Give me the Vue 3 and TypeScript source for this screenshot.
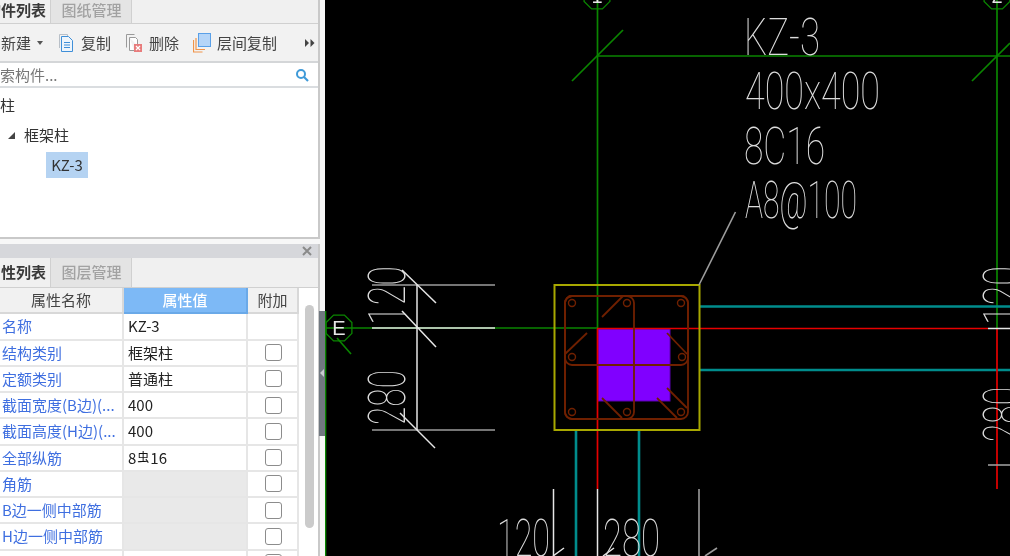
<script setup lang="ts">
interface PropRow {
  name: string
  value?: string
  sym?: boolean
  empty?: boolean
  noCheck?: boolean
}

const rows: PropRow[] = [
  { name: '名称', value: 'KZ-3', noCheck: true },
  { name: '结构类别', value: '框架柱' },
  { name: '定额类别', value: '普通柱' },
  { name: '截面宽度(B边)(...', value: '400' },
  { name: '截面高度(H边)(...', value: '400' },
  { name: '全部纵筋', sym: true },
  { name: '角筋', empty: true },
  { name: 'B边一侧中部筋', empty: true },
  { name: 'H边一侧中部筋', empty: true },
  { name: '箍筋', value: '中8@100(4*4)' }
]

type Seg = [number, number, number, number]

const green: Seg[] = [
  [597.5, 0, 597.5, 329],
  [997, 0, 997, 328],
  [597, 56, 1010, 56],
  [572, 81, 623, 30],
  [972, 81, 1010, 43],
  [326, 328, 597, 328],
  [337, 338, 351, 354],
  [325.5, 311, 325.5, 556]
]
const red: Seg[] = [
  [597.5, 329, 597.5, 489],
  [997, 328, 997, 489],
  [597, 328.5, 988, 328.5]
]
const teal: Seg[] = [
  [699, 306.5, 1010, 306.5],
  [699, 370, 1010, 370],
  [576, 430, 576, 556],
  [639, 430, 639, 556]
]
const white: Seg[] = [
  [372, 328, 495, 328],
  [417, 285, 417, 430],
  [402, 270, 436, 303],
  [402, 311, 436, 347],
  [400, 413, 435, 448],
  [597.5, 489, 597.5, 556],
  [553.5, 489, 553.5, 556],
  [564, 548, 553, 556],
  [614, 548, 603, 556],
  [988, 328.5, 1010, 328.5]
]
const gray: Seg[] = [
  [372, 285, 495, 285],
  [372, 430, 495, 430],
  [699, 489, 699, 556],
  [717, 548, 705, 556],
  [699, 285, 735.5, 212],
  [988, 465, 1010, 465]
]
const hooks: Seg[] = [
  [602, 317, 623, 296],
  [587, 333, 565, 354],
  [667, 333, 687, 354],
  [667, 388, 687, 408],
  [657, 398, 677, 418],
  [602, 398, 622, 418]
]
const bars = [
  [572, 303], [627, 303], [681, 303],
  [572, 357], [682, 357],
  [572, 412], [627, 412], [681, 412]
]

const labels = [
  { t: 'KZ-3', x: 744, y: 55, w: 76, s: 52 },
  { t: '400x400', x: 745, y: 109, w: 135, s: 52 },
  { t: '8C16', x: 744, y: 164, w: 81, s: 52 },
  { t: 'A8@100', x: 745, y: 218, w: 112, s: 52 },
  { t: '120', x: 497, y: 556, w: 53, s: 52 },
  { t: '280', x: 603, y: 556, w: 57, s: 52 }
]
const sideLabels = [
  { t: '120', x: 405, y: 325, w: 59 },
  { t: '280', x: 405, y: 425, w: 55 },
  { t: '120', x: 1020, y: 325, w: 59 },
  { t: '280', x: 1020, y: 442, w: 55 }
]

// 轴号圆圈是八边形
function octagon(cx: number, cy: number, r: number) {
  const pts: string[] = []
  for (let i = 0; i < 8; i++) {
    const a = Math.PI / 8 + (i * Math.PI) / 4
    pts.push(`${(cx + r * Math.cos(a)).toFixed(1)},${(cy + r * Math.sin(a)).toFixed(1)}`)
  }
  return pts.join(' ')
}
</script>

<template>
  <div class="page">
    <aside class="side">
      <section class="panel top-panel">
        <div class="tabs">
          <span class="tab active">构件列表</span>
          <span class="tab">图纸管理</span>
        </div>
        <div class="toolbar">
          <span class="tool new">新建<i class="caret"></i></span>
          <span class="tool">
            <svg width="18" height="20" viewBox="0 0 18 20">
              <path d="M2.500 15V1.500h8v2" fill="none" stroke="#b9c0c8" />
              <path d="M4.500 3.500h7l4 4v11h-11z" fill="#eef5fc" stroke="#3f8fd8" />
              <path d="M7 9.500h6M7 12h6M7 14.500h6" stroke="#3f8fd8" />
            </svg>
            复制
          </span>
          <span class="tool">
            <svg width="18" height="20" viewBox="0 0 18 20">
              <path d="M1.500 14.500V1.500h8" fill="none" stroke="#9a9a9a" />
              <path d="M4.500 4.500h6l2 2v6M9 17.500H4.500v-13" fill="#fff" stroke="#9a9a9a" />
              <rect x="9" y="11" width="8" height="8" fill="#e87c7c" />
              <path d="M11 13l4 4M15 13l-4 4" stroke="#fff" stroke-width="1.200" />
            </svg>
            删除
          </span>
          <span class="tool">
            <svg width="18" height="20" viewBox="0 0 18 20">
              <path d="M.5 7v12h9M3 5v11.500h9" fill="none" stroke="#f0944a" stroke-width="1.200" />
              <rect x="5.500" y="0.500" width="12" height="13" fill="#b5d5f8" stroke="#5aa0e8" />
            </svg>
            层间复制
          </span>
          <span class="more">
            <svg width="10" height="8" viewBox="0 0 10 8">
              <path d="M0 0l4 4-4 4zM5.500 0l4 4-4 4z" fill="#444" />
            </svg>
          </span>
        </div>
        <div class="search">
          <span class="search-text">搜索构件...</span>
          <svg width="14" height="14" viewBox="0 0 14 14">
            <circle cx="6" cy="6" r="4" fill="none" stroke="#3f9ad8" stroke-width="2" />
            <path d="M9 9l4 4" stroke="#3f9ad8" stroke-width="2.200" />
          </svg>
        </div>
        <div class="tree">
          <div class="node">柱</div>
          <div class="node branch"><i class="arrow"></i>框架柱</div>
          <div class="node leaf"><span class="picked">KZ-3</span></div>
        </div>
      </section>

      <section class="panel bottom-panel">
        <div class="title-bar">
          <svg width="10" height="10" viewBox="0 0 10 10">
            <path d="M1 1l8 8M9 1l-8 8" stroke="#8a8a8a" stroke-width="2" />
          </svg>
        </div>
        <div class="tabs">
          <span class="tab active">属性列表</span>
          <span class="tab">图层管理</span>
        </div>
        <div class="table-wrap">
          <div class="prop-table">
            <div class="cell head">属性名称</div>
            <div class="cell head value-head">属性值</div>
            <div class="cell head">附加</div>
            <template v-for="row in rows" :key="row.name">
              <div class="cell name">{{ row.name }}</div>
              <div class="cell value" :class="{ empty: row.empty }">
                <template v-if="row.sym">8<span class="rebar">虫</span>16</template>
                <template v-else>{{ row.value }}</template>
              </div>
              <div class="cell check">
                <i v-if="!row.noCheck" class="box"></i>
              </div>
            </template>
          </div>
          <div class="track"><div class="thumb"></div></div>
        </div>
      </section>

      <div class="handle"><i></i></div>
    </aside>

    <main class="canvas">
      <svg class="drawing" width="685" height="556" viewBox="325 0 685 556">
        <g stroke="#0a8500" stroke-width="1.700">
          <line v-for="(s, i) in green" :key="i" :x1="s[0]" :y1="s[1]" :x2="s[2]" :y2="s[3]" />
        </g>
        <g fill="none" stroke="#0a8500" stroke-width="1.300">
          <polygon :points="octagon(339, 328, 14)" />
          <polygon :points="octagon(597, -4, 14)" />
          <polygon :points="octagon(997, -4, 14)" />
        </g>
        <g stroke="#008c8c" stroke-width="2.600">
          <line v-for="(s, i) in teal" :key="i" :x1="s[0]" :y1="s[1]" :x2="s[2]" :y2="s[3]" />
        </g>
        <rect x="598" y="329" width="72" height="72" fill="#8000ff" stroke="#5a00b0" stroke-width="1" />
        <g stroke="#e60000" stroke-width="1.700">
          <line v-for="(s, i) in red" :key="i" :x1="s[0]" :y1="s[1]" :x2="s[2]" :y2="s[3]" />
        </g>
        <g fill="none" stroke="#702000" stroke-width="1.800">
          <rect x="565" y="296" width="123" height="123" rx="7" />
          <rect x="565" y="296" width="69" height="123" rx="7" />
          <rect x="565" y="296" width="123" height="69" rx="7" />
          <line v-for="(s, i) in hooks" :key="i" :x1="s[0]" :y1="s[1]" :x2="s[2]" :y2="s[3]" />
          <circle v-for="(b, i) in bars" :key="i" :cx="b[0]" :cy="b[1]" r="3.500" stroke-width="1.400" />
        </g>
        <rect x="554.500" y="285" width="145" height="145" fill="none" stroke="#a8a800" stroke-width="2" />
        <g stroke="#9c9c9c" stroke-width="1.600">
          <line v-for="(s, i) in gray" :key="i" :x1="s[0]" :y1="s[1]" :x2="s[2]" :y2="s[3]" />
        </g>
        <g stroke="#e6e6e6" stroke-width="1.500">
          <line v-for="(s, i) in white" :key="i" :x1="s[0]" :y1="s[1]" :x2="s[2]" :y2="s[3]" />
        </g>
        <g class="cad-text">
          <text
            v-for="l in labels"
            :key="l.t + l.x"
            :x="l.x"
            :y="l.y"
            :font-size="l.s"
            :textLength="l.w"
            lengthAdjust="spacingAndGlyphs"
          >{{ l.t }}</text>
          <text
            v-for="l in sideLabels"
            :key="l.t + l.x"
            :x="0"
            :y="0"
            font-size="52"
            :textLength="l.w"
            lengthAdjust="spacingAndGlyphs"
            :transform="`translate(${l.x} ${l.y}) rotate(-90)`"
          >{{ l.t }}</text>
        </g>
        <g class="axis-text">
          <text x="339" y="335" text-anchor="middle">E</text>
          <text x="597" y="3" text-anchor="middle">1</text>
          <text x="997" y="3" text-anchor="middle">2</text>
        </g>
      </svg>
    </main>
  </div>
</template>

<style>
html,
body {
  margin: 0;
  background: #000;
}
</style>

<style scoped>
.page {
  display: flex;
  width: 1010px;
  height: 556px;
  overflow: hidden;
  font-family: "Noto Sans CJK SC", "Liberation Sans", sans-serif;
  font-size: 15px;
  color: #333;
  filter: blur(0.4px);
}

.side {
  position: relative;
  flex: none;
  width: 325px;
  height: 556px;
  overflow: hidden;
  background: #f7f7f7;
  display: flex;
  flex-direction: column;
}

.panel {
  width: 320px;
  box-sizing: border-box;
  border-right: 2px solid #c9c9c9;
  background: #fff;
}

.top-panel {
  height: 239px;
  flex: none;
  border-bottom: 2px solid #c9c9c9;
  display: flex;
  flex-direction: column;
}

.bottom-panel {
  margin-top: 5px;
  flex: 1;
  display: flex;
  flex-direction: column;
  min-height: 0;
}

.title-bar {
  height: 14px;
  flex: none;
  background: #d6d7db;
  display: flex;
  align-items: center;
  justify-content: flex-end;
  padding-right: 6px;
}

.tabs {
  flex: none;
  box-sizing: border-box;
  display: flex;
  height: 24px;
  margin-left: -15px;
  background: #f0f0f0;
  border-bottom: 1px solid #d0d0d0;
  line-height: 20px;
}

.bottom-panel .tabs {
  height: 30px;
  line-height: 28px;
}

.tab {
  width: 81px;
  box-sizing: border-box;
  padding-left: 1px;
  text-align: center;
  color: #a2a2a2;
  background: #e4e4e4;
  border-right: 1px solid #d0d0d0;
  font-weight: 500;
}

.tab.active {
  width: 66px;
  padding-right: 9px;
  text-align: right;
  white-space: nowrap;
  color: #3a3a3a;
  background: #f0f0f0;
  font-weight: 700;
}

.toolbar {
  flex: none;
  box-sizing: border-box;
  height: 39px;
  display: flex;
  align-items: center;
  background: #f2f2f2;
  border-bottom: 2px solid #d4d6d8;
  color: #444;
}

.tool {
  display: flex;
  align-items: center;
  gap: 6px;
  margin-right: 14px;
}

.tool.new {
  gap: 0;
  margin-right: 14px;
  margin-left: 1px;
}

.caret {
  width: 0;
  height: 0;
  margin-left: 6px;
  border: 3px solid transparent;
  border-top: 4px solid #555;
  border-bottom: 0;
}

.more {
  margin-left: auto;
  margin-right: 3px;
  display: flex;
}

.search {
  flex: none;
  box-sizing: border-box;
  height: 25px;
  display: flex;
  align-items: center;
  justify-content: space-between;
  padding-right: 9px;
  border-bottom: 2px solid #dadde0;
  color: #777;
}

.search-text {
  margin-left: -15px;
}

.tree {
  flex: 1;
  padding-top: 2px;
  color: #333;
}

.node {
  height: 30px;
  line-height: 30px;
}

.branch {
  display: flex;
  align-items: center;
  padding-left: 8px;
}

.arrow {
  width: 0;
  height: 0;
  margin-right: 9px;
  border-left: 7px solid transparent;
  border-bottom: 7px solid #444;
}

.leaf {
  padding-left: 46px;
}

.picked {
  display: block;
  margin-top: 2px;
  width: 42px;
  height: 26px;
  line-height: 26px;
  text-align: center;
  background: #b5d3f2;
}

.table-wrap {
  flex: 1;
  min-height: 0;
  display: flex;
  overflow: hidden;
}

.prop-table {
  flex: none;
  display: grid;
  grid-template-columns: 124px 124px 51px;
  grid-auto-rows: 26.25px;
  width: 299px;
}

.cell {
  box-sizing: border-box;
  border-right: 2px solid #e6e6e6;
  border-bottom: 2px solid #e6e6e6;
  line-height: 24px;
  white-space: nowrap;
  overflow: hidden;
}

.head {
  background: #f1f1f1;
  border-color: #d8d8d8;
  text-align: center;
  color: #444;
}

.value-head {
  background: #7db9f6;
  color: #fff;
  font-weight: 500;
  border-color: #6aa9e8;
}

.name {
  padding-left: 2px;
  color: #3f6fe0;
}

.value {
  padding-left: 4px;
  color: #222;
}

.value.empty {
  background: #e9e9e9;
}

.rebar {
  font-size: 12px;
  position: relative;
  top: -2px;
  margin: 0 1px;
  color: #111;
}

.check {
  display: flex;
  align-items: center;
  justify-content: center;
  padding-left: 1px;
}

.box {
  width: 15px;
  height: 15px;
  border: 1px solid #8c8c8c;
  border-radius: 3px;
  background: #fff;
}

.track {
  flex: 1;
  padding: 17px 0 0 6px;
}

.thumb {
  width: 9px;
  height: 223px;
  background: #cbcbcb;
  border-radius: 5px;
}

.handle {
  position: absolute;
  left: 319px;
  top: 311px;
  width: 6px;
  height: 125px;
  background: #707880;
}

.handle i {
  position: absolute;
  left: 1px;
  top: 58px;
  border: 4px solid transparent;
  border-right: 4px solid #c8ccd0;
  border-left: 0;
}

.canvas {
  flex: 1;
  height: 556px;
  background: #000;
}

.drawing {
  display: block;
}

.cad-text text {
  font-family: Roboto, "Liberation Sans", sans-serif;
  font-weight: 100;
  fill: #dcdcdc;
}

.axis-text text {
  font-family: "Liberation Sans", sans-serif;
  font-size: 20px;
  fill: #e6e6e6;
}
</style>
